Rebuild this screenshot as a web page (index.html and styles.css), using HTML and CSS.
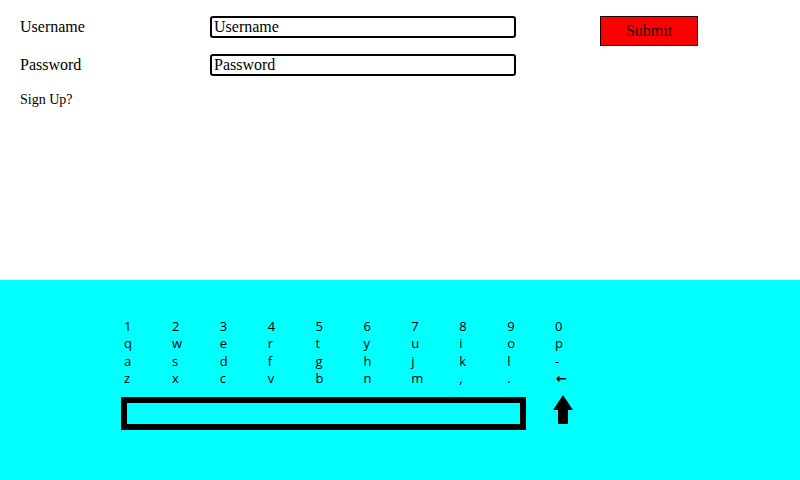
FILE: index.html
```html
<!DOCTYPE html>
<html>
<head>
<meta charset="utf-8">
<link rel="stylesheet" href="styles.css">
</head>
<body>
<div class="top">
  <form class="login">
    <label class="lbl row1">Username</label>
    <input class="field row1" type="text" value="Username">
    <button class="submit" type="button">Submit</button>
    <label class="lbl row2">Password</label>
    <input class="field row2" type="text" value="Password">
    <div class="signup">Sign Up?</div>
  </form>
</div>
<div class="kbd">
  <div class="keys">
    <span>1</span><span>2</span><span>3</span><span>4</span><span>5</span><span>6</span><span>7</span><span>8</span><span>9</span><span>0</span>
    <span>q</span><span>w</span><span>e</span><span>r</span><span>t</span><span>y</span><span>u</span><span>i</span><span>o</span><span>p</span>
    <span>a</span><span>s</span><span>d</span><span>f</span><span>g</span><span>h</span><span>j</span><span>k</span><span>l</span><span>-</span>
    <span>z</span><span>x</span><span>c</span><span>v</span><span>b</span><span>n</span><span>m</span><span>,</span><span>.</span><span class="bksp">&#8592;</span>
  </div>
  <div class="bottom-row">
    <div class="space"></div>
    <svg class="shift" width="20" height="29" viewBox="0 0 20 29"><polygon points="10,0 20,15 15,15 15,29 5,29 5,15 0,15" fill="#000"/></svg>
  </div>
</div>
</body>
</html>
```
FILE: styles.css
```css
html, body {
  margin: 0;
  padding: 0;
  background: #fff;
}
body {
  width: 800px;
  height: 480px;
  overflow: hidden;
  font-family: "Liberation Serif", "Times New Roman", serif;
  color: #000;
}
.top {
  height: 280px;
  box-sizing: border-box;
  padding: 16px 0 0 20px;
}
.login {
  display: grid;
  grid-template-columns: 190px 306px 84px 98px;
  grid-template-rows: 22px 22px auto;
  row-gap: 16px;
  align-items: center;
  margin: 0;
}
.row1 {
  grid-row: 1;
}
.row2 {
  grid-row: 2;
}
.lbl {
  grid-column: 1;
  font-size: 16px;
  line-height: 18px;
}
.field {
  grid-column: 2;
  box-sizing: border-box;
  width: 306px;
  height: 22px;
  margin: 0;
  border: 2px solid #000;
  border-radius: 3px;
  padding: 0 2px;
  font-family: "Liberation Serif", "Times New Roman", serif;
  font-size: 16px;
  color: #000;
  background: #fff;
  outline: none;
}
.submit {
  grid-column: 4;
  grid-row: 1 / span 2;
  align-self: start;
  box-sizing: border-box;
  width: 98px;
  height: 30px;
  margin: 0;
  padding: 0;
  background: #ff0000;
  border: 1px solid #200;
  border-radius: 0;
  font-family: "Liberation Serif", "Times New Roman", serif;
  font-size: 16px;
  color: #200;
}
.signup {
  grid-column: 1;
  grid-row: 3;
  font-size: 14px;
  line-height: 16px;
}
.kbd {
  height: 200px;
  box-sizing: border-box;
  background: #00ffff;
  padding-top: 38px;
  font-family: "Open Sans", "DejaVu Sans", sans-serif;
  font-size: 13px;
  color: #000;
}
.keys {
  display: grid;
  grid-template-columns: repeat(10, 47.9px);
  grid-auto-rows: 17.4px;
  line-height: 17.4px;
  padding-left: 124px;
}
.bksp {
  font-family: "DejaVu Sans", sans-serif;
  font-size: 13px;
  font-weight: bold;
  padding-left: 1px;
}
.bottom-row {
  display: flex;
  align-items: flex-start;
  gap: 27px;
  margin-top: 7.4px;
  padding-left: 121px;
}
.space {
  box-sizing: border-box;
  width: 405px;
  height: 33px;
  margin-top: 2px;
  border: 6px solid #000;
}
.shift {
  display: block;
}
```
